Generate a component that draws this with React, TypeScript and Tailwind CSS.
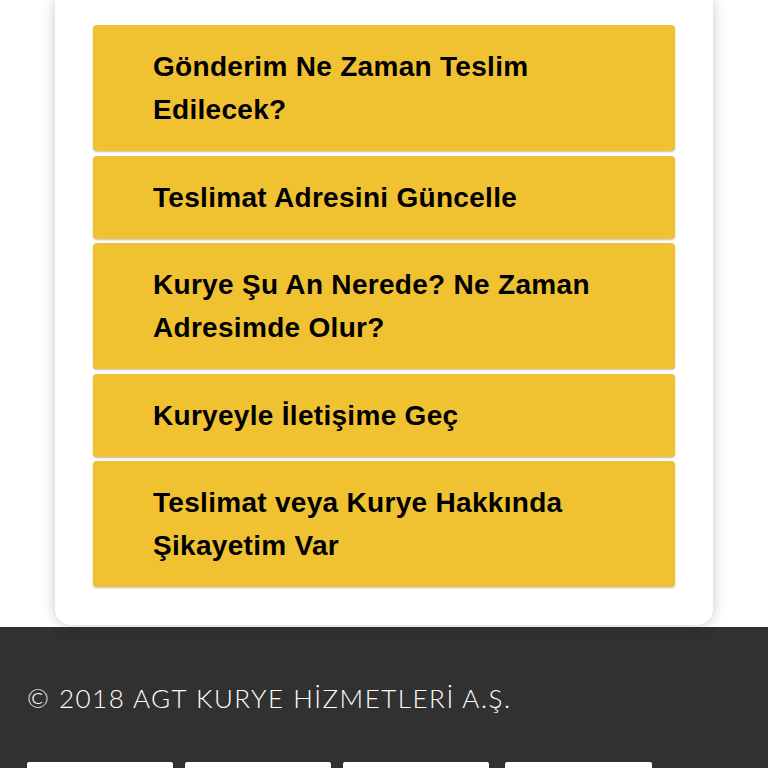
import React from "react";

const items = [
  ["Gönderim Ne Zaman Teslim", "Edilecek?"],
  ["Teslimat Adresini Güncelle"],
  ["Kurye Şu An Nerede? Ne Zaman", "Adresimde Olur?"],
  ["Kuryeyle İletişime Geç"],
  ["Teslimat veya Kurye Hakkında", "Şikayetim Var"],
];

export default function App() {
  return (
    <div className="w-[768px] h-[768px] overflow-hidden bg-white flex flex-col">
      <div className="px-[55px] relative z-10">
        <div className="bg-white rounded-b-[16px] shadow-[0_0_14px_rgba(0,0,0,0.22)] px-[38px] pt-[25px] pb-[38px] flex flex-col gap-[4.5px]">
          {items.map((lines, i) => (
            <div
              key={i}
              className="bg-[#f0c232] rounded-[4px] shadow-[0_1px_2px_rgba(0,0,0,0.25)] pl-[60px] pr-4 py-[20px] text-[28px] leading-[43px] font-bold text-black tracking-[0.3px]"
              style={{ fontFamily: "'Liberation Sans', Arial, sans-serif" }}
            >
              {lines.map((l, j) => (
                <div key={j}>{l}</div>
              ))}
            </div>
          ))}
        </div>
      </div>
      <div className="bg-[#323132] mt-[2px] flex-1 flex flex-col pt-[55px] px-[27px]">
        <div
          className="text-white text-[26px] leading-[32px] font-light tracking-[1.5px]"
          style={{ fontFamily: "Lato, sans-serif" }}
        >
          © 2018 AGT KURYE HİZMETLERİ A.Ş.
        </div>
        <div className="flex gap-[12px] mt-[48px]">
          <div className="w-[146px] h-[40px] bg-white rounded-[2px]" />
          <div className="w-[146px] h-[40px] bg-white rounded-[2px]" />
          <div className="w-[146px] h-[40px] bg-white rounded-[2px]" />
          <div className="w-[147px] h-[40px] bg-white rounded-[2px] ml-[4px]" />
        </div>
      </div>
    </div>
  );
}
